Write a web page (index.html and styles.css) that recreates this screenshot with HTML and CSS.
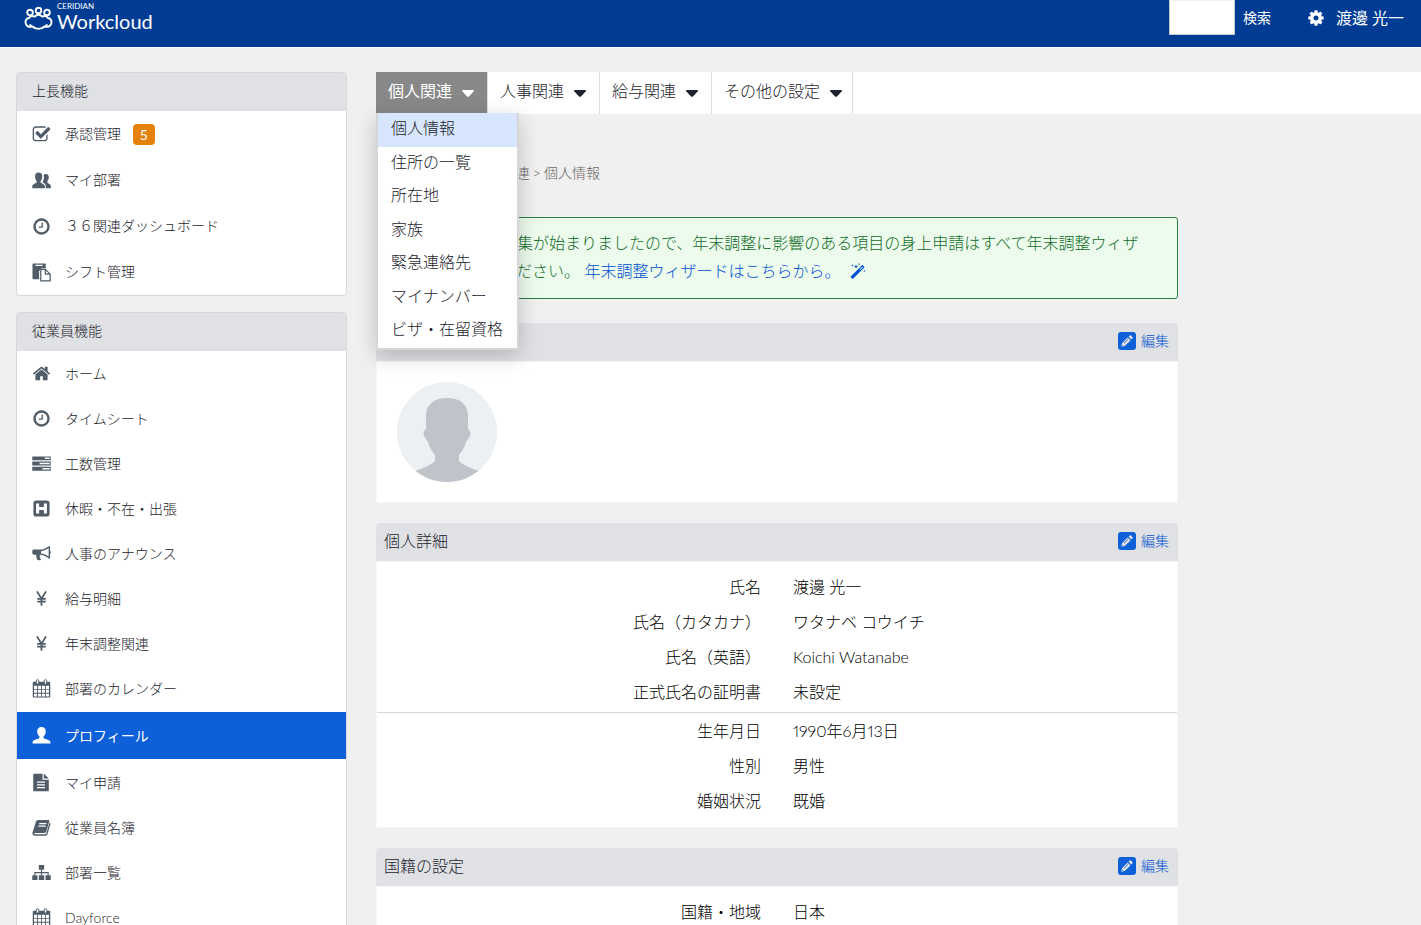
FILE: index.html
```html
<!DOCTYPE html>
<html lang="ja">
<head>
<meta charset="utf-8">
<title>Workcloud</title>
<link rel="stylesheet" href="styles.css">
</head>
<body>
<svg class="sprite" aria-hidden="true">
  <symbol id="i-check" viewBox="0 0 1792 1792"><path d="M1472 930v318q0 119-84.500 203.500t-203.500 84.500h-832q-119 0-203.500-84.500t-84.500-203.500v-832q0-119 84.500-203.500t203.500-84.500h832q63 0 117 25 15 7 18 23 3 17-9 29l-49 49q-10 10-23 10-3 0-9-2-23-6-45-6h-832q-66 0-113 47t-47 113v832q0 66 47 113t113 47h832q66 0 113-47t47-113v-254q0-13 9-22l64-64q10-10 23-10 6 0 12 3 20 8 20 29zm231-489l-814 814q-24 24-57 24t-57-24l-430-430q-24-24-24-57t24-57l110-110q24-24 57-24t57 24l263 263 647-647q24-24 57-24t57 24l110 110q24 24 24 57t-24 57z"/></symbol>
  <symbol id="i-users" viewBox="0 0 20 20"><path d="M7 1.500c2.500 0 3.800 1.600 3.800 4.200 0 2-.8 3.700-1.800 4.800v1.700c0 .8 4.500 1.300 4.500 3.900v2H.3v-2c0-2.600 4.600-3.100 4.600-3.900v-1.700C4 9.400 3.200 7.700 3.200 5.700c0-2.600 1.300-4.200 3.800-4.200z"/><path d="M12.200 4.200c.6-.8 1.400-1.100 2.300-1.100 2.100 0 3.200 1.400 3.200 3.500 0 1.700-.7 3.100-1.500 4v1.600c0 .8 3.600 1.500 3.600 3.600v2.300h-5.300v-2.300c0-2-1.300-2.900-2.600-3.500l-.4-.3v-1.300c.7-1.200 1.100-2.700 1.100-4.300 0-.8-.1-1.500-.4-2.200z"/></symbol>
  <symbol id="i-clock" viewBox="0 0 1792 1792"><path d="M1024 544v448q0 14-9 23t-23 9h-320q-14 0-23-9t-9-23v-64q0-14 9-23t23-9h224v-352q0-14 9-23t23-9h64q14 0 23 9t9 23zm416 352q0-148-73-273t-198-198-273-73-273 73-198 198-73 273 73 273 198 198 273 73 273-73 198-198 73-273zm224 0q0 209-103 385.500t-279.500 279.500-385.500 103-385.500-103-279.500-279.500-103-385.500 103-385.500 279.500-279.500 385.500-103 385.500 103 279.500 279.500 103 385.500z"/></symbol>
  <symbol id="i-paste" viewBox="0 0 20 20"><path d="M.5 1.800C.5 1 1 .6 1.600.6h11.800c.7 0 1.100.4 1.100 1.200v3.700h-4.300L7.500 8.300v8.900h-6C1 17.200.5 16.700.5 16z"/><path d="M3.700 1.800h7.500v1.300H3.700z" fill="#fff"/><path d="M9.200 6.700h4.900l5 5v7.200H9.200zM14 6.700v5h5.100" fill="#fff" stroke="currentColor" stroke-width="1.300" stroke-linejoin="round"/></symbol>
  <symbol id="i-home" viewBox="0 0 1792 1792"><path d="M1472 992v480q0 26-19 45t-45 19h-384v-384h-256v384h-384q-26 0-45-19t-19-45v-480q0-1 .5-3t.5-3l575-474 575 474q1 2 1 6zm223-69l-62 74q-8 9-21 11h-3q-13 0-21-7l-692-577-692 577q-12 8-24 7-13-2-21-11l-62-74q-8-10-7-23.500t11-21.500l719-599q32-26 76-26t76 26l244 204v-195q0-14 9-23t23-9h192q14 0 23 9t9 23v408l219 182q10 8 11 21.500t-7 23.500z"/></symbol>
  <symbol id="i-tasks" viewBox="0 0 20 20"><path d="M.3 2.500h19.400v4H.3zM.3 8h19.400v4H.3zM.3 13.500h19.400v4H.3z"/><path d="M13.500 3.800h5v1.400h-5zM8 9.300h10.500v1.400H8zM11 14.800h7.500v1.400H11z" fill="#fff"/></symbol>
  <symbol id="i-hsquare" viewBox="0 0 20 20"><rect x="1.500" y="1.500" width="17" height="17" rx="3"/><path d="M4.300 4.800h3.200v3.700h5V4.800h3.200v10.400h-3.200v-3.700h-5v3.700H4.300z" fill="#fff"/></symbol>
  <symbol id="i-horn" viewBox="0 0 20 20"><path fill-rule="evenodd" d="M18.200 2c.5 0 .8.300.8.800v4.500c.6.200.9.800.9 1.500s-.3 1.300-.9 1.500v4.400c0 .6-.3.900-.8.900-3.200-2.700-6-4-9.200-4.300-1 .4-1.300 1.500-.6 2.300-.5.800.1 1.600 1.200 2.400-.6 1.200-3.100 1.300-4.100.5-.7-2-1.400-3.600-.9-5.300H2.200C1 11.200.3 10.500.3 9.400V7.700c0-1.100.7-1.800 1.900-1.800h5.500c3.700 0 7.100-1.300 10.500-3.900zm-.7 2.300c-2.700 1.900-5.400 2.900-8 3.200v2.400c2.700.3 5.300 1.300 8 3.200z"/></symbol>
  <symbol id="i-yen" viewBox="0 0 20 20"><path d="M5.200 2.500 10 10.200l4.800-7.700M10 10v7.500M5.500 10.300h9M5.500 13.200h9" fill="none" stroke="currentColor" stroke-width="1.900"/></symbol>
  <symbol id="i-cal" viewBox="0 0 20 20"><path d="M1.700 2.800h16.600c.5 0 .9.400.9.900v15c0 .5-.4.900-.9.900H1.700c-.5 0-.9-.4-.9-.9v-15c0-.5.400-.9.900-.9z"/><path d="M2.100 7.200h3.300v3.200H2.100zM6.400 7.200h3.200v3.200H6.400zM10.500 7.200h3.200v3.200h-3.200zM14.600 7.200h3.300v3.200h-3.300zM2.100 11.400h3.300v3H2.100zM6.400 11.400h3.200v3H6.400zM10.500 11.400h3.200v3h-3.200zM14.600 11.400h3.300v3h-3.300zM2.100 15.400h3.300v3H2.100zM6.400 15.400h3.200v3H6.400zM10.500 15.400h3.200v3h-3.200zM14.600 15.400h3.300v3h-3.300z" fill="#fff"/><rect x="4.500" y=".7" width="2.600" height="4.600" rx="1.200" fill="#fff" stroke="currentColor"/><rect x="12.900" y=".7" width="2.600" height="4.600" rx="1.200" fill="#fff" stroke="currentColor"/></symbol>
  <symbol id="i-user" viewBox="0 0 20 20"><path d="M10 1c2.900 0 4.500 1.700 4.500 4.400 0 2.300-1 4.300-2.300 5.400v1.700c0 1 7.200 1.600 7.200 4.500v1.300H.6V17c0-2.900 7.200-3.500 7.200-4.500v-1.700C6.500 9.700 5.500 7.700 5.500 5.400 5.500 2.700 7.100 1 10 1z"/></symbol>
  <symbol id="i-file" viewBox="0 0 20 20"><path d="M2.300.7h8.800v6.400h6.600v11.200c0 .6-.4 1-1 1H2.300c-.6 0-1-.4-1-1V1.700c0-.6.4-1 1-1zM12.400.9c.4.100.8.400 1.100.7l3.400 3.300c.3.300.6.600.7 1h-5.200z"/><path d="M5.300 9h8.400v1.300H5.300zM5.300 11.900h8.400v1.300H5.300zM5.300 14.800h8.400v1.300H5.300z" fill="#fff"/></symbol>
  <symbol id="i-book" viewBox="0 0 20 20"><path d="M6.800 2h10.100c1 0 1.500.8 1.200 1.800L15.200 14c-.3 1-1.200 1.800-2.200 1.800H3c-.9 0-.8 1.300.1 1.300h10.700c.7 0 1.100-.4 1.300-1l3.400-11.300c.8.300 1.200.9.900 1.900l-3.200 10.400c-.3 1-1.200 1.600-2.200 1.600H3.300c-1.900 0-3.400-1.600-2.800-3.300L4.100 4C4.500 2.800 5.500 2 6.800 2z"/><path d="M7.800 5.200h7.600l-.4 1.300H7.400zM7 7.900h7.600l-.4 1.300H6.600z" fill="#fff"/></symbol>
  <symbol id="i-tree" viewBox="0 0 20 20"><path d="M7.200 2h5.600v5.200H7.200zM.3 13h5.500v5H.3zM7.200 13h5.600v5H7.200zM14.200 13h5.500v5h-5.500z"/><path d="M10 7v6M3 13v-2.800h14V13" fill="none" stroke="currentColor" stroke-width="1.200"/></symbol>
  <symbol id="i-cog" viewBox="0 0 1792 1792"><path d="M1152 896q0-106-75-181t-181-75-181 75-75 181 75 181 181 75 181-75 75-181zm512-109v222q0 12-8 23t-20 13l-185 28q-19 54-39 91 35 50 107 138 10 12 10 25t-9 23q-27 37-99 108t-94 71q-12 0-26-9l-138-108q-44 23-91 38-16 136-29 186-7 28-36 28h-222q-14 0-24.500-8.500t-11.500-21.500l-28-184q-49-16-90-37l-141 107q-10 9-25 9-14 0-25-11-126-114-165-168-7-10-7-23 0-12 8-23 15-21 51-66.500t54-70.500q-27-50-41-99l-183-27q-13-2-21-12.500t-8-23.500v-222q0-12 8-23t19-13l186-28q14-46 39-92-40-57-107-138-10-12-10-24 0-10 9-23 26-36 98.500-107.500t94.500-71.500q13 0 26 10l138 107q44-23 91-38 16-136 29-186 7-28 36-28h222q14 0 24.500 8.500t11.500 21.500l28 184q49 16 90 37l142-107q9-9 24-9 13 0 25 10 129 119 165 170 7 8 7 22 0 12-8 23-15 21-51 66.500t-54 70.500q26 50 41 98l183 28q13 2 21 12.500t8 23.500z"/></symbol>
  <symbol id="i-caret" viewBox="0 0 12 7"><path d="M1 0h10c1 0 1.300.9.600 1.600L7.200 6.200c-.7.800-1.700.8-2.400 0L.4 1.600C-.3.900 0 0 1 0z"/></symbol>
  <symbol id="i-edit" viewBox="0 0 18 18"><rect width="18" height="18" rx="3"/><path d="M3.200 14.800 4 11.300l5.700-5.700 2.800 2.800-5.800 5.700zM10.500 4.800l1.100-1.100c.5-.5 1.100-.5 1.600 0l1.200 1.200c.5.500.5 1.100 0 1.600l-1.100 1.100z" fill="#dfe1e5"/><path d="m5.900 11.400 4.100-4.100M4.300 13.600l1 .2" stroke="currentColor" stroke-width=".8"/></symbol>
  <symbol id="i-wand" viewBox="0 0 16 16"><path d="M1 13.200 11.800 2.400c.4-.4.900-.4 1.300 0l1 1c.4.400.4.900 0 1.300L3.300 15.400c-.4.400-.9.400-1.300 0l-1-1c-.4-.4-.4-.8 0-1.200z"/><path d="m9.500 6.500 2.900-2.900.6.600-2.900 2.900z" fill="#edfbed"/><path d="m2.400 1 .4 1 1 .4-1 .3-.4 1-.3-1-1-.3 1-.4zM6 1.500l.6 1.600 1.600.5-1.600.6L6 5.800l-.5-1.600-1.600-.6 1.600-.5zM9 0l.3.800.8.300-.8.300L9 2.200l-.3-.8-.8-.3.800-.3zM14.500 6.800l.3.800.8.300-.8.300-.3.900-.3-.9-.8-.3.800-.3z"/></symbol>
</svg>

<div class="app">
  <header class="topbar">
    <a class="brand" href="#">
      <svg class="brand-mark" viewBox="0 0 28 25" aria-hidden="true"><g fill="none" stroke="#fff" stroke-width="1.900"><circle cx="5.500" cy="6.500" r="2.800"/><circle cx="14" cy="4.500" r="2.800"/><circle cx="22.500" cy="6.500" r="2.800"/><path d="M8 20.500c-3.800 1.300-7-.8-7-4.200 0-2.600 1.600-4 3.700-4.300 1.200-2.300 3.400-2.600 5.500-1.300 2.200-2.500 5.400-2.500 7.600 0 2.100-1.300 4.300-1 5.500 1.300 2.100.3 3.700 1.700 3.700 4.300 0 3.400-3.200 5.500-7 4.200-3 3.200-9 3.200-12 0zM8 20.500c-1.300-.4-2.200-1.200-2.700-2.200M20 20.500c1.300-.4 2.200-1.200 2.700-2.200" stroke-linejoin="round"/></g></svg>
      <span class="brand-text"><small>CERIDIAN</small><span>Workcloud</span></span>
    </a>
    <form class="search">
      <input type="text" aria-label="検索">
      <button type="button">検索</button>
    </form>
    <a class="account" href="#"><svg class="cog" aria-hidden="true"><use href="#i-cog"/></svg>渡邊 光一</a>
  </header>

  <div class="layout">
    <aside class="sidebar">
      <nav class="panel roomy">
        <h2>上長機能</h2>
        <ul>
          <li><a href="#"><svg><use href="#i-check"/></svg>承認管理<span class="badge">5</span></a></li>
          <li><a href="#"><svg><use href="#i-users"/></svg>マイ部署</a></li>
          <li><a href="#"><svg><use href="#i-clock"/></svg>３６関連ダッシュボード</a></li>
          <li><a href="#"><svg><use href="#i-paste"/></svg>シフト管理</a></li>
        </ul>
      </nav>
      <nav class="panel">
        <h2>従業員機能</h2>
        <ul>
          <li><a href="#"><svg><use href="#i-home"/></svg>ホーム</a></li>
          <li><a href="#"><svg><use href="#i-clock"/></svg>タイムシート</a></li>
          <li><a href="#"><svg><use href="#i-tasks"/></svg>工数管理</a></li>
          <li><a href="#"><svg><use href="#i-hsquare"/></svg>休暇・不在・出張</a></li>
          <li><a href="#"><svg><use href="#i-horn"/></svg>人事のアナウンス</a></li>
          <li><a href="#"><svg><use href="#i-yen"/></svg>給与明細</a></li>
          <li><a href="#"><svg><use href="#i-yen"/></svg>年末調整関連</a></li>
          <li><a href="#"><svg><use href="#i-cal"/></svg>部署のカレンダー</a></li>
          <li class="active"><a href="#" aria-current="page"><svg><use href="#i-user"/></svg>プロフィール</a></li>
          <li><a href="#"><svg><use href="#i-file"/></svg>マイ申請</a></li>
          <li><a href="#"><svg><use href="#i-book"/></svg>従業員名簿</a></li>
          <li><a href="#"><svg><use href="#i-tree"/></svg>部署一覧</a></li>
          <li><a href="#"><svg><use href="#i-cal"/></svg>Dayforce</a></li>
        </ul>
      </nav>
    </aside>

    <main>
      <nav class="tabs">
        <div class="tab open">
          <button type="button" aria-expanded="true">個人関連<svg><use href="#i-caret"/></svg></button>
          <ul class="menu">
            <li class="current"><a href="#">個人情報</a></li>
            <li><a href="#">住所の一覧</a></li>
            <li><a href="#">所在地</a></li>
            <li><a href="#">家族</a></li>
            <li><a href="#">緊急連絡先</a></li>
            <li><a href="#">マイナンバー</a></li>
            <li><a href="#">ビザ・在留資格</a></li>
          </ul>
        </div>
        <div class="tab"><button type="button">人事関連<svg><use href="#i-caret"/></svg></button></div>
        <div class="tab"><button type="button">給与関連<svg><use href="#i-caret"/></svg></button></div>
        <div class="tab"><button type="button">その他の設定<svg><use href="#i-caret"/></svg></button></div>
      </nav>

      <div class="content">
        <p class="crumbs"><span>プロフィール</span><span>&gt;</span><span>個人関連</span><span>&gt;</span><span>個人情報</span></p>
        <p class="notice">年末調整の情報収集が始まりましたので、年末調整に影響のある項目の身上申請はすべて年末調整ウィザ<br>ードで申請してください。 <a href="#">年末調整ウィザードはこちらから。<svg><use href="#i-wand"/></svg></a></p>

        <section class="card">
          <header><h3>写真</h3><a href="#"><svg><use href="#i-edit"/></svg>編集</a></header>
          <div class="card-body photo">
            <svg class="avatar" viewBox="0 0 100 100" role="img" aria-label="写真"><clipPath id="round"><circle cx="50" cy="50" r="50"/></clipPath><g clip-path="url(#round)"><path d="M0 0h100v100H0z" fill="#ecf0f3"/><path d="M50 16c14 0 21 7 21 18v13c2 1 3 4 2 7l-4 6c-1 5-4 9-7 13v6c5 5 12 7 20 10v15H18V89c8-3 15-5 20-10v-6c-3-4-6-8-7-13l-4-6c-1-3 0-6 2-7V34c0-11 7-18 21-18z" fill="#bfc4cb"/></g></svg>
          </div>
        </section>

        <section class="card">
          <header><h3>個人詳細</h3><a href="#"><svg><use href="#i-edit"/></svg>編集</a></header>
          <div class="card-body">
            <dl>
              <div><dt>氏名</dt><dd>渡邊 光一</dd></div>
              <div><dt>氏名（カタカナ）</dt><dd>ワタナベ コウイチ</dd></div>
              <div><dt>氏名（英語）</dt><dd>Koichi Watanabe</dd></div>
              <div><dt>正式氏名の証明書</dt><dd>未設定</dd></div>
            </dl>
            <dl>
              <div><dt>生年月日</dt><dd>1990年6月13日</dd></div>
              <div><dt>性別</dt><dd>男性</dd></div>
              <div><dt>婚姻状況</dt><dd>既婚</dd></div>
            </dl>
          </div>
        </section>

        <section class="card">
          <header><h3>国籍の設定</h3><a href="#"><svg><use href="#i-edit"/></svg>編集</a></header>
          <div class="card-body">
            <dl>
              <div><dt>国籍・地域</dt><dd>日本</dd></div>
            </dl>
          </div>
        </section>
      </div>
    </main>
  </div>
</div>
</body>
</html>
```
FILE: styles.css
```css
* {
  box-sizing: border-box;
}

body {
  margin: 0;
  background: #f0f0f0;
  color: #1c232b;
  font: 300 16px/24px Lato, "Noto Sans CJK JP", sans-serif;
  font-variant-numeric: proportional-nums;
}

h2, h3, p, ul, dl, dd {
  margin: 0;
  padding: 0;
  font-weight: inherit;
}

ul {
  list-style: none;
}

a {
  color: inherit;
  text-decoration: none;
}

button {
  border: 0;
  padding: 0;
  background: none;
  color: inherit;
  font: inherit;
  cursor: pointer;
}

svg {
  flex: none;
  fill: currentColor;
}

.sprite {
  display: none;
}

.app {
  height: 100vh;
  overflow: hidden;
}

/* Top bar */
.topbar {
  display: flex;
  align-items: flex-start;
  height: 47px;
  padding: 0 17px 0 24px;
  background: #003c94;
  box-shadow: 0 1px #fafafa;
  color: #fff;
  font-weight: 400;
}

.brand {
  display: flex;
  gap: 4px;
  margin-right: auto;
}

.brand-mark {
  width: 29px;
  height: 25px;
  margin-top: 6px;
}

.brand-text {
  display: flex;
  flex-direction: column;
  padding-top: 2px;
  font-size: 20px;
  line-height: 21px;
}

.brand-text small {
  font-size: 8px;
  line-height: 9px;
}

.search {
  display: flex;
  gap: 8px;
  margin-right: 36px;
  font-size: 14px;
}

.search input {
  width: 66px;
  height: 35px;
  border: 1px solid #c4c8cc;
  border-top-color: #f0f0f0;
  background: #fff;
}

.search button,
.account {
  height: 36px;
}

.account {
  display: flex;
  align-items: center;
  gap: 11px;
}

.cog {
  width: 18px;
  height: 18px;
}

/* Page columns */
.layout {
  display: flex;
  gap: 29px;
  padding: 25px 0 0 16px;
}

.sidebar {
  display: flex;
  flex: none;
  flex-direction: column;
  gap: 16px;
  width: 331px;
  font-size: 14px;
}

.panel {
  border: 1px solid #d6d8da;
  border-radius: 4px;
  background: #fff;
  overflow: hidden;
}

.panel h2 {
  padding: 6px 15px 8px;
  background: #dfe1e5;
  font-size: 14px;
}

.panel a {
  display: flex;
  align-items: center;
  height: 45px;
  padding: 0 15px;
}

.roomy a {
  height: 46px;
}

.panel svg {
  width: 19px;
  height: 19px;
  margin-right: 14px;
  color: #505d68;
}

.panel .active {
  margin: 1px 0;
  background: #0d60d8;
  color: #fff;
  font-weight: 400;
}

.active a {
  height: 47px;
}

.panel .active svg {
  color: #fff;
}

.badge {
  margin-left: 12px;
  padding: 0 7px;
  border-radius: 4px;
  background: #e5820d;
  color: #fff;
  font-weight: 400;
  line-height: 21px;
}

/* Tabs */
main {
  flex: 1;
  min-width: 0;
}

.tabs {
  display: flex;
  height: 42px;
  background: #fff;
}

.tab {
  position: relative;
  border-right: 1px solid #dedede;
}

.tab button {
  display: flex;
  align-items: center;
  gap: 10px;
  height: 41px;
  padding: 0 13px 3px 12px;
}

.tab:last-child button {
  padding-right: 10px;
}

.tab svg {
  width: 12px;
  height: 7px;
  margin-top: 4px;
}

.tab.open button {
  background: #888;
  color: #fff;
  font-weight: 400;
}

.menu {
  position: absolute;
  z-index: 1;
  top: 41px;
  left: 0;
  display: grid;
  grid-auto-rows: 1fr;
  min-height: 237px;
  border: 2px solid #d6d6d6;
  border-top: 0;
  background: #fff;
  box-shadow: 0 6px 20px rgba(0, 0, 0, 0.2);
  white-space: nowrap;
}

.menu a {
  display: block;
  padding: 3px 14px 0 13px;
}

.menu .current {
  background: #d7e6fd;
}

/* Main content */
.content {
  display: flex;
  flex-direction: column;
  max-width: 802px;
}

.crumbs {
  display: flex;
  gap: 3px;
  padding: 47px 0 32px;
  color: #666;
  font-size: 14px;
}

.notice {
  margin-bottom: 24px;
  padding: 11px 12px 13px;
  border: 1px solid #27803f;
  border-radius: 3px;
  background: #edfbed;
  color: #0f6a28;
  line-height: 28px;
}

.notice a {
  color: #0050d0;
}

.notice svg {
  width: 16px;
  height: 16px;
  margin-left: 10px;
  vertical-align: -2px;
}

.card {
  margin-bottom: 20px;
}

.card header {
  display: flex;
  align-items: center;
  justify-content: space-between;
  height: 38px;
  padding: 0 9px 2px 8px;
  border-radius: 4px 4px 0 0;
  background: #dfe1e5;
}

.card h3 {
  font-size: 16px;
}

.card header a {
  display: flex;
  align-items: center;
  gap: 5px;
  color: #0050d0;
  font-size: 14px;
}

.card header svg {
  width: 18px;
  height: 18px;
  color: #0d60d8;
}

.card-body {
  padding: 7px 0 9px;
  border: 1px solid #f6f6f6;
  background: #fff;
  color: #000;
}

.card-body.photo {
  padding: 20px;
}

.avatar {
  display: block;
  width: 100px;
  height: 100px;
}

dl div {
  display: grid;
  grid-template-columns: 48% 1fr;
  gap: 32px;
  line-height: 35px;
}

dl + dl {
  margin-top: 3px;
  border-top: 1px solid #d4d6d9;
}

dt {
  text-align: right;
}
```
